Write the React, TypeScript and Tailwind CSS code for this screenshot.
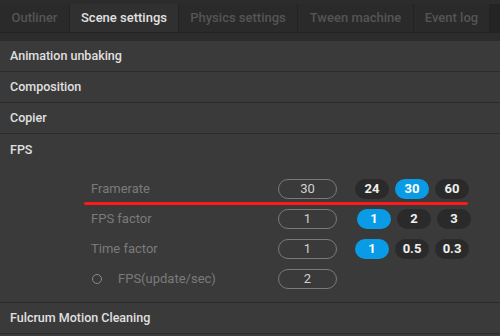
import React from 'react';

const tabs = ['Outliner', 'Scene settings', 'Physics settings', 'Tween machine', 'Event log'];
const tabWidths = ['w-[70px]', 'w-[109px]', 'w-[119px]', 'w-[116px]', 'w-[76px]'];

interface FpsRow {
  label: string;
  value: string;
  options: string[];
  selected: number;
  radio?: boolean;
  shift?: boolean;
}

const rows: FpsRow[] = [
  { label: 'Framerate', value: '30', options: ['24', '30', '60'], selected: 1 },
  { label: 'FPS factor', value: '1', options: ['1', '2', '3'], selected: 0, shift: true },
  { label: 'Time factor', value: '1', options: ['1', '0.5', '0.3'], selected: 0 },
  { label: 'FPS(update/sec)', value: '2', options: [], selected: -1, radio: true },
];

const SectionHeader: React.FC<{ title: string }> = ({ title }) => (
  <div className="h-[31px] flex items-center pl-[10px] pt-[1px] border-b border-[#2b2b2b] text-[12.5px] font-medium text-[#e0e0e0]">
    {title}
  </div>
);

export default function App() {
  return (
    <div className="w-[500px] h-[336px] overflow-hidden bg-[#3a3a3a] font-['Roboto',sans-serif]">
      <div className="h-[41px] bg-[#2c2c2c] pt-[4px] border-b border-[#2b2b2b]">
        <div className="flex h-[29px] border-b border-[#222]">
          {tabs.map((t, i) => (
            <div
              key={t}
              className={`${tabWidths[i]} flex items-center justify-center border-r border-[#222] text-[13px] font-medium ${
                i === 1 ? 'bg-[#303030] text-[#e2e2e2]' : 'bg-[#2a2a2a] text-[#555]'
              }`}
            >
              {t}
            </div>
          ))}
          <div className="flex-1 bg-[#242424]" />
        </div>
      </div>

      <SectionHeader title="Animation unbaking" />
      <SectionHeader title="Composition" />
      <SectionHeader title="Copier" />
      <div className="h-[31px] flex items-center pl-[10px] pt-[1px] text-[12.5px] font-medium text-[#e0e0e0]">FPS</div>

      <div className="relative h-[138px] pt-[14px] border-b border-[#2b2b2b] flex flex-col gap-[10px]">
        {rows.map((r) => (
          <div key={r.label} className="flex items-center h-[20px]">
            <div className="w-[278px] flex items-center pl-[91px] text-[13px] text-[#7a7a7a]">
              {r.radio && (
                <span className="ml-[1px] mr-[16px] w-[10px] h-[10px] rounded-full border border-[#8a8a8a]" />
              )}
              <span>{r.label}</span>
            </div>
            <div className="w-[59px] h-[20px] rounded-full border border-[#7a7a7a] flex items-center justify-center text-[13px] text-[#d0d0d0]">
              {r.value}
            </div>
            <div className={`flex gap-[6px] ${r.shift ? 'ml-[20px]' : 'ml-[18px]'}`}>
              {r.options.map((o, i) => (
                <div
                  key={o}
                  className={`w-[34px] h-[20px] rounded-full flex items-center justify-center text-[13px] font-bold ${
                    i === r.selected ? 'bg-[#0a9be6] text-white' : 'bg-[#2a2a2a] text-[#f0f0f0]'
                  }`}
                >
                  {o}
                </div>
              ))}
            </div>
          </div>
        ))}
        <div className="absolute left-[84px] top-[37px] w-[384px] h-[3px] rounded-full bg-[#ff1a1a]" />
      </div>

      <SectionHeader title="Fulcrum Motion Cleaning" />
    </div>
  );
}
